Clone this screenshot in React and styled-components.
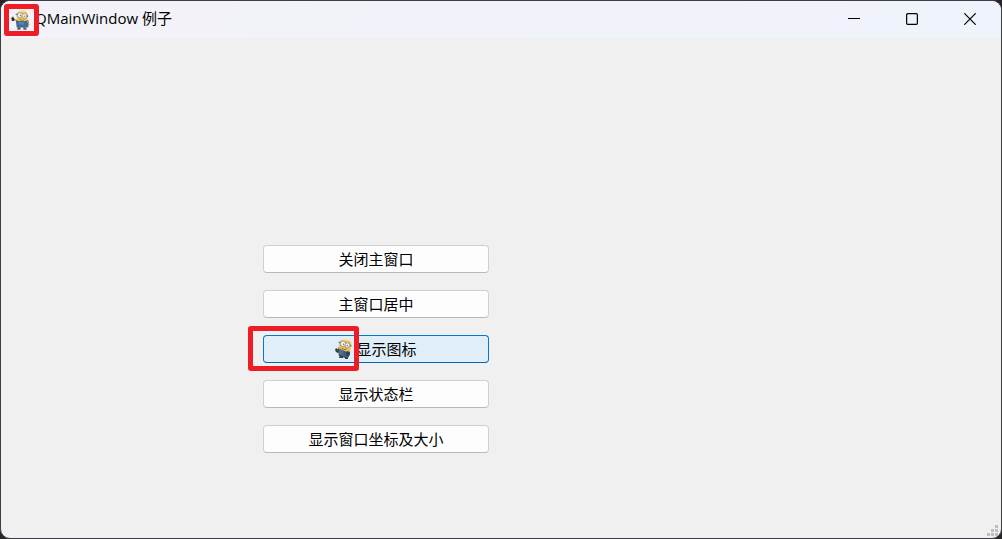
import React from 'react';
import styled, { createGlobalStyle, css } from 'styled-components';

const GlobalStyle = createGlobalStyle`
  * { box-sizing: border-box; }
  body {
    margin: 0;
    background: #26262a;
    color: #000;
    font-family: "Open Sans", "Noto Sans CJK SC", sans-serif;
  }
  button { font: inherit; color: inherit; }
`;

const Window = styled.main`
  display: flex;
  flex-direction: column;
  min-height: 100vh;
  overflow: hidden;
  border: 1px solid #3e3e42;
  border-radius: 10px;
  background: #f0f0f0;
`;

const TitleBar = styled.header`
  display: flex;
  align-items: stretch;
  height: 37px;
  padding: 0 2px 0 10px;
  background: linear-gradient(90deg, #f3f2f8, #eff3fb);
`;

const AppIcon = styled.span`
  position: relative;
  display: flex;
  align-items: center;
  width: 19px;
`;

const Title = styled.h1`
  flex: 1;
  margin: 0;
  padding-left: 5px;
  font-size: 15px;
  font-weight: 400;
  line-height: 35px;
  white-space: nowrap;
`;

const CaptionButton = styled.button`
  display: flex;
  align-items: center;
  justify-content: center;
  width: 58px;
  padding: 0 0 2px;
  border: 0;
  background: transparent;
`;

const Client = styled.section`
  flex: 1;
  padding: 207px 16px 64px 262px;
`;

const ButtonList = styled.div`
  display: flex;
  flex-direction: column;
  gap: 17px;
  max-width: 226px;
`;

const PushButton = styled.button`
  position: relative;
  display: flex;
  align-items: center;
  justify-content: center;
  gap: 4px;
  height: 28px;
  padding: 0;
  border: 1px solid #d0d0d0;
  border-bottom-color: #b9b9b9;
  border-radius: 4px;
  background: #fdfdfd;
  font-size: 15px;
  line-height: 24px;
  white-space: nowrap;
  ${({ $active }) => $active && css`
    border-color: #0078d4;
    border-bottom-color: #0067b8;
    background: #e0eef9;
  `}
`;

const Highlight = styled.span`
  position: absolute;
  top: ${({ $top }) => $top}px;
  left: ${({ $left }) => $left}px;
  width: ${({ $width }) => $width}px;
  height: ${({ $height }) => $height}px;
  border: 5px solid #ee1c25;
  border-radius: 3px;
  pointer-events: none;
`;

const StatusBar = styled.footer`
  display: flex;
  justify-content: flex-end;
  padding: 0 3px 2px;
`;

function MinionFace() {
  return (
    <>
      <path d="M6 5c0-3 2-5 6-5 4 0 6 3 6 6l-1 6H6z" fill="#efc652" />
      <path d="M8 2c2-2 5-2 7-1" fill="none" stroke="#fae59a" strokeWidth="1.5" />
      <path d="M5 4l13 2" stroke="#77736a" strokeWidth="1.5" />
      <circle cx="9.5" cy="5" r="2.7" fill="#f4f3f0" stroke="#a19c90" />
      <circle cx="14" cy="5.7" r="2.5" fill="#f4f3f0" stroke="#a19c90" />
      <circle cx="10" cy="5.3" r="0.7" fill="#846b50" />
      <circle cx="14" cy="6" r="0.7" fill="#846b50" />
      <path d="M9 9.5c2 1 4 1 5 0" fill="none" stroke="#a46e35" />
    </>
  );
}

function MinionWaving() {
  return (
    <svg width="20" height="20" viewBox="0 0 20 20" aria-hidden="true">
      <path d="M6 11L3 9" stroke="#d9b04a" strokeWidth="1.5" />
      <path d="M0 7l1 1 1-2 1 2 1 1-1 2H1z" fill="#2d2f35" />
      <MinionFace />
      <path d="M5 10l3 1h7l3-1 1 3-1 5H6z" fill="#41699a" />
      <path d="M8 12h6v3H8z" fill="#5881ae" />
      <path d="M17 11l2 4-1 2" fill="none" stroke="#d9b04a" />
      <path d="M7 18v1l-1 1h4v-2zM13 18v2h4l-2-2z" fill="#3a4450" />
    </svg>
  );
}

function MinionLeaning() {
  return (
    <svg width="17" height="20" viewBox="0 0 17 20" aria-hidden="true">
      <g transform="rotate(8 9 9) translate(-2 0)">
        <MinionFace />
      </g>
      <path d="M3 8l4 3 6 2 2-1-1 6-4 1-6-2-1-4z" fill="#3f5c7b" />
      <path d="M4 10l4 2v5l-4-2z" fill="#506f8f" />
      <path d="M1 9l3 2-1 3-2-1-1-2zM12 12l3 1v3l-3 1-1-2z" fill="#34404d" />
      <path d="M3 8l2 2M14 11l1 2" stroke="#d9b04a" strokeWidth="1.2" />
      <path d="M5 16l-1 3h4v-2zM10 18v2h3v-2z" fill="#353d47" />
    </svg>
  );
}

const glyphs = {
  minimize: <path d="M0 5.5h12" />,
  maximize: <rect x="0.65" y="0.65" width="10.7" height="10.7" rx="1" />,
  close: <path d="M0.3 0.3l11.4 11.4M11.7 0.3L0.3 11.7" />,
};

function Caption({ kind, label }) {
  return (
    <CaptionButton type="button" aria-label={label}>
      <svg width="12" height="12" viewBox="0 0 12 12" fill="none" stroke="#000" strokeWidth="1.2">
        {glyphs[kind]}
      </svg>
    </CaptionButton>
  );
}

export default function App() {
  return (
    <>
      <GlobalStyle />
      <Window>
        <TitleBar>
          <AppIcon>
            <MinionWaving />
            <Highlight $top={3} $left={-7} $width={35} $height={32} />
          </AppIcon>
          <Title>QMainWindow 例子</Title>
          <Caption kind="minimize" label="最小化" />
          <Caption kind="maximize" label="最大化" />
          <Caption kind="close" label="关闭" />
        </TitleBar>
        <Client>
          <ButtonList>
            <PushButton type="button">关闭主窗口</PushButton>
            <PushButton type="button">主窗口居中</PushButton>
            <PushButton type="button" $active>
              <MinionLeaning />
              显示图标
              <Highlight $top={-10} $left={-16} $width={111} $height={45} />
            </PushButton>
            <PushButton type="button">显示状态栏</PushButton>
            <PushButton type="button">显示窗口坐标及大小</PushButton>
          </ButtonList>
        </Client>
        <StatusBar>
          <svg width="11" height="11" viewBox="0 0 11 11" fill="#bfbfbf" aria-hidden="true">
            <path d="M8 0h3v3H8zM4 4h3v3H4zM8 4h3v3H8zM0 8h3v3H0zM4 8h3v3H4zM8 8h3v3H8z" />
          </svg>
        </StatusBar>
      </Window>
    </>
  );
}
